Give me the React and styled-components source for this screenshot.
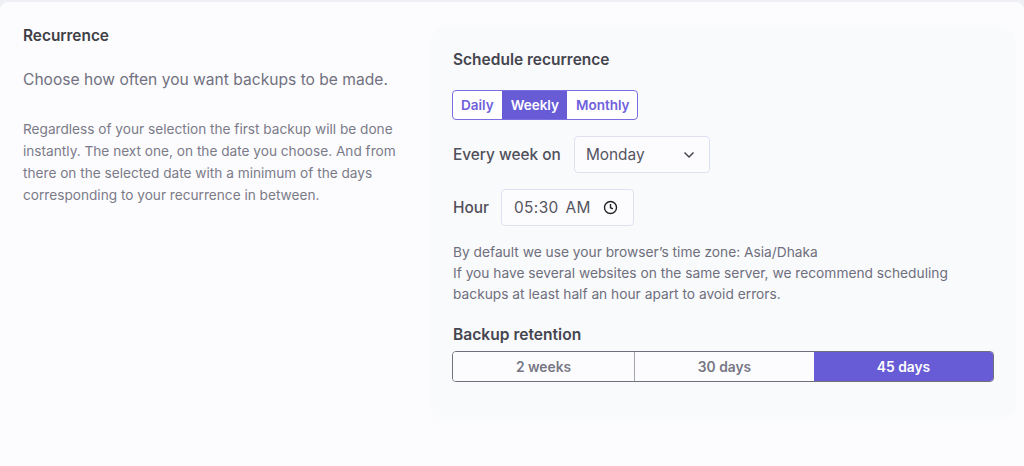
import React from 'react';
import styled, { createGlobalStyle } from 'styled-components';

const Global = createGlobalStyle`
  html, body { margin: 0; padding: 0; background: #eef0f6; }
  body { font-family: Inter, "Liberation Sans", sans-serif; }
  * { box-sizing: border-box; }
`;
const Page = styled.div`
  width: 1024px; height: 466px; margin-top: 2px; padding: 25px 8px 0 23px;
  background: #fcfcfe; border-radius: 8px 8px 0 0; display: flex; overflow: hidden;
`;
const Intro = styled.section`width: 407px; flex: none;`;
const Title = styled.h2`margin: 0; font-size: 15.4px; line-height: 17px; font-weight: 600; color: #3f3f46;`;
const Lead = styled.p`margin: 26px 0 0; font-size: 15.6px; line-height: 20px; color: #71717f; white-space: nowrap;`;
const Note = styled.p`margin: 28px 0 0; font-size: 13.65px; line-height: 22px; color: #7b7b88; width: 378px;`;
const Card = styled.section`
  width: 586px; height: 393px; background: #f9fafc; border-radius: 16px; padding: 24px 22px 0 23px;
`;
const CardTitle = styled.h3`margin: 0; font-size: 15.5px; line-height: 18px; font-weight: 600; color: #45454f;`;
const Freq = styled.div`
  margin: 21px 0 0 -1px; display: flex; width: fit-content; height: 30px; border: 1px solid #7b6ee0; border-radius: 4px; overflow: hidden; background: #fff;
`;
const FreqBtn = styled.div`
  padding: 0 ${p => p.$right}px 0 ${p => p.$left}px; display: flex; align-items: center; font-size: 13.5px; font-weight: 600;
  color: ${p => p.$active ? '#fff' : '#6f60dc'}; background: ${p => p.$active ? '#675cd6' : 'transparent'};
`;
const Row = styled.div`margin-top: ${p => p.$mt}px; display: flex; align-items: center; gap: ${p => p.$gap}px;`;
const Label = styled.span`font-size: 15.4px; font-weight: 500; color: #50505a;`;
const Field = styled.div`
  height: 37px; width: ${p => p.$w}px; padding: 0 ${p => p.$right}px 0 ${p => p.$left}px; display: flex; align-items: center; justify-content: space-between;
  background: #fcfcff; border: 1px solid #dfe0f2; border-radius: 4px; font-size: 15.4px; color: #55555f;
`;
const TimeValue = styled.span`letter-spacing: 0.4px; word-spacing: 2px;`;
const Help = styled.p`margin: 16px 0 0; font-size: 13.75px; line-height: 21px; color: #6f6f7c; white-space: pre-line;`;
const SubTitle = styled.h3`margin: 21px 0 0; font-size: 15.6px; line-height: 18px; font-weight: 600; color: #45454f;`;
const Retention = styled.div`
  margin: 7px 0 0 -1px; width: 542px; height: 31px; display: flex; border: 1px solid #70707f; border-radius: 4px; overflow: hidden;
`;
const RetBtn = styled.div`
  width: ${p => p.$w}px; flex: none; display: flex; align-items: center; justify-content: center; font-size: 13.8px; font-weight: 600;
  color: ${p => p.$active ? '#fff' : '#777784'}; background: ${p => p.$active ? '#675cd6' : '#fcfcfe'};
  border-right: ${p => p.$divider ? '1px solid #a5a5b0' : 'none'};
`;

const Chevron = () => (
  <svg width="12" height="8" viewBox="0 0 12 8" fill="none" stroke="#46464f" strokeWidth="1.5"><path d="M1.5 1.5 6 6l4.5-4.5" /></svg>
);
const Clock = () => (
  <svg width="15" height="15" viewBox="0 0 15 15" fill="none" stroke="#222" strokeWidth="1.4"><circle cx="7.5" cy="7.5" r="6" /><path d="M7.5 4v3.7l2.4 1.2" /></svg>
);

export default function App() {
  return (
    <>
      <Global />
      <Page>
        <Intro>
          <Title>Recurrence</Title>
          <Lead>Choose how often you want backups to be made.</Lead>
          <Note>Regardless of your selection the first backup will be done instantly. The next one, on the date you choose. And from there on the selected date with a minimum of the days corresponding to your recurrence in between.</Note>
        </Intro>
        <Card>
          <CardTitle>Schedule recurrence</CardTitle>
          <Freq>
            <FreqBtn $left={8} $right={8}>Daily</FreqBtn>
            <FreqBtn $left={9} $right={8} $active>Weekly</FreqBtn>
            <FreqBtn $left={9} $right={7}>Monthly</FreqBtn>
          </Freq>
          <Row $mt={16} $gap={13}>
            <Label>Every week on</Label>
            <Field $w={136} $left={11} $right={14}>Monday <Chevron /></Field>
          </Row>
          <Row $mt={16} $gap={12}>
            <Label>Hour</Label>
            <Field $w={133} $left={12} $right={15}><TimeValue>05:30 AM</TimeValue> <Clock /></Field>
          </Row>
          <Help>{"By default we use your browser’s time zone: Asia/Dhaka\nIf you have several websites on the same server, we recommend scheduling\nbackups at least half an hour apart to avoid errors."}</Help>
          <SubTitle>Backup retention</SubTitle>
          <Retention>
            <RetBtn $w={182} $divider>2 weeks</RetBtn>
            <RetBtn $w={179}>30 days</RetBtn>
            <RetBtn $w={179} $active>45 days</RetBtn>
          </Retention>
        </Card>
      </Page>
    </>
  );
}
